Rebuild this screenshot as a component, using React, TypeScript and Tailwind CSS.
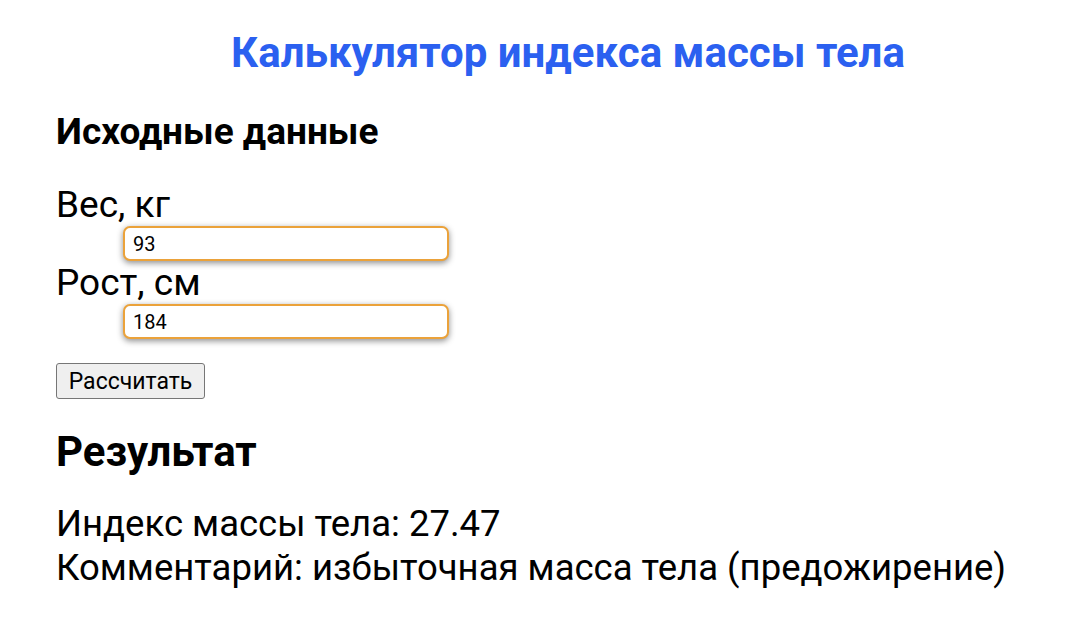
import { useState } from 'react';

const font = { fontFamily: 'Roboto, "Noto Sans", sans-serif' };

export default function App() {
  const [weight, setWeight] = useState('93');
  const [height, setHeight] = useState('184');
  const [bmi, setBmi] = useState('27.47');

  const calc = () => {
    const w = parseFloat(weight);
    const h = parseFloat(height) / 100;
    if (w > 0 && h > 0) setBmi((w / (h * h)).toFixed(2));
  };

  return (
    <div className="min-h-screen bg-white text-black pl-[56px] pt-[28px]" style={font}>
      <h1 className="text-center text-[42px] font-bold leading-[49px] text-[#2b60f0]">
        Калькулятор индекса массы тела
      </h1>

      {/* Input section */}
      <h2 className="mt-[33px] text-[37px] font-bold leading-[43px]">Исходные данные</h2>

      <div className="mt-[31px]">
        <div className="text-[37px] leading-[42px]">Вес, кг</div>
        <input
          value={weight}
          onChange={e => setWeight(e.target.value)}
          className="ml-[67px] block h-[35px] w-[326px] rounded-[7px] border-2 border-[#eba23a] bg-white pl-2 text-[20px] text-black shadow-[0_2px_6px_rgba(0,0,0,0.45)] outline-none"
        />
        <div className="text-[37px] leading-[43px]">Рост, см</div>
        <input
          value={height}
          onChange={e => setHeight(e.target.value)}
          className="ml-[67px] block h-[35px] w-[326px] rounded-[7px] border-2 border-[#eba23a] bg-white pl-2 text-[20px] text-black shadow-[0_2px_6px_rgba(0,0,0,0.45)] outline-none"
        />
      </div>

      <button
        onClick={calc}
        className="mt-[24px] h-[36px] w-[149px] rounded-[3px] border border-[#767676] bg-[#efefef] text-[23px] leading-none text-black"
      >
        Рассчитать
      </button>

      {/* Result section */}
      <h2 className="mt-[29px] text-[42px] font-bold leading-[48px]">Результат</h2>
      <div className="mt-[26px] text-[36.5px] leading-[44px]">
        <div>Индекс массы тела: {bmi}</div>
        <div>Комментарий: избыточная масса тела (предожирение)</div>
      </div>
    </div>
  );
}
